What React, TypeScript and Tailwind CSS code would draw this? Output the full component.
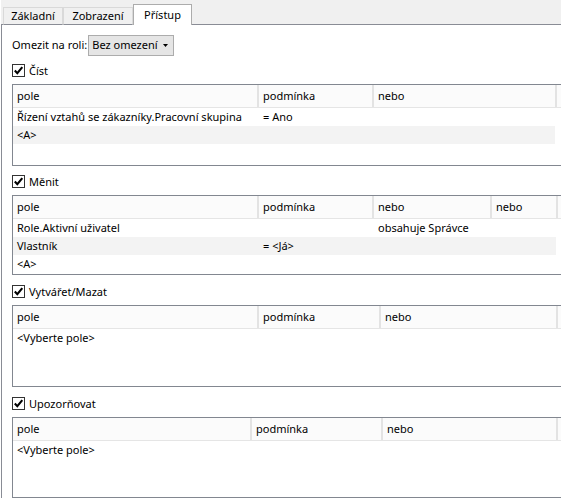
import React from 'react';

type Column = { label: string; width: number };
type Row = string[];

function CheckBox() {
  return (
    <span className="flex h-[13px] w-[13px] items-center justify-center border border-[#333333] bg-white">
      <svg width="11" height="11" viewBox="0 0 11 11">
        <path d="M1.8 5.6 L4.3 8.2 L9.3 2.2" fill="none" stroke="#000" strokeWidth="2.1" />
      </svg>
    </span>
  );
}

function Grid({ columns, rows, height }: { columns: Column[]; rows: Row[]; height: number }) {
  const total = columns.reduce((s, c) => s + c.width, 0);
  return (
    <div className="w-[580px] border border-[#828790] bg-white" style={{ height }}>
      <div className="flex h-[23px] border-b border-[#e5e5e5] bg-[#fbfbfb]">
        {columns.map((c, i) => (
          <div
            key={i}
            className="flex shrink-0 items-center border-r-2 border-[#e3e3e3] pl-[4px]"
            style={{ width: c.width }}
          >
            {c.label}
          </div>
        ))}
      </div>
      {rows.map((r, ri) => (
        <div
          key={ri}
          className={ri % 2 === 1 ? 'flex h-[18px] items-center bg-[#f3f3f3]' : 'flex h-[18px] items-center'}
          style={{ width: total - 2 }}
        >
          {columns.map((c, i) => (
            <div key={i} className="shrink-0 whitespace-nowrap pl-[4px]" style={{ width: c.width }}>
              {r[i] || ''}
            </div>
          ))}
        </div>
      ))}
    </div>
  );
}

function Section({ label, children, top }: { label: string; children: React.ReactNode; top: number }) {
  return (
    <div style={{ marginTop: top }}>
      <div className="flex h-[13px] items-center gap-[4px]">
        <CheckBox />
        <span className="leading-none">{label}</span>
      </div>
      <div className="mt-[7px]">{children}</div>
    </div>
  );
}

export default function App() {
  return (
    <div className="h-[501px] w-[561px] overflow-hidden bg-white font-['Noto_Sans',sans-serif] text-[11px] text-black">
      <div className="ml-[1px]">
        {/* tab strip */}
        <div className="relative flex h-[25px] items-end border-b border-[#898c95] bg-[#f0f0f0] pl-[2px]">
          <div className="relative -mb-px flex h-[18px] w-[60px] items-center justify-center border border-b-[#898c95] border-[#d9d9d9] bg-[#f0f0f0]">
            Základní
          </div>
          <div className="relative -mb-px flex h-[18px] w-[70px] items-center justify-center border border-b-[#898c95] border-[#d9d9d9] bg-[#f0f0f0]">
            Zobrazení
          </div>
          <div className="relative -mb-px flex h-[21px] w-[59px] items-start justify-center border border-b-0 border-[#acacac] bg-white pt-[2px]">
            Přístup
          </div>
        </div>

        {/* panel */}
        <div className="border-l border-[#898c95] pl-[10px] pt-[10px]">
          <div className="flex h-[21px] items-center">
            <span className="mr-[1px]">Omezit na roli:</span>
            <div className="flex h-[21px] w-[86px] items-center justify-between border border-[#acacac] bg-[#e5e5e5] pl-[3px] pr-[5px]">
              <span>Bez omezení</span>
              <svg width="5" height="3" viewBox="0 0 5 3">
                <path d="M0 0 H5 L2.5 3 Z" fill="#000" />
              </svg>
            </div>
          </div>

          <Section label="Číst" top={8}>
            <Grid
              height={82}
              columns={[
                { label: 'pole', width: 246 },
                { label: 'podmínka', width: 115 },
                { label: 'nebo', width: 183 },
              ]}
              rows={[['Řízení vztahů se zákazníky.Pracovní skupina', '= Ano'], ['<A>']]}
            />
          </Section>

          <Section label="Měnit" top={9}>
            <Grid
              height={80}
              columns={[
                { label: 'pole', width: 246 },
                { label: 'podmínka', width: 115 },
                { label: 'nebo', width: 118 },
                { label: 'nebo', width: 66 },
              ]}
              rows={[
                ['Role.Aktivní uživatel', '', 'obsahuje Správce'],
                ['Vlastník', '= <Já>'],
                ['<A>'],
              ]}
            />
          </Section>

          <Section label="Vytvářet/Mazat" top={10}>
            <Grid
              height={82}
              columns={[
                { label: 'pole', width: 246 },
                { label: 'podmínka', width: 122 },
                { label: 'nebo', width: 177 },
              ]}
              rows={[['<Vyberte pole>']]}
            />
          </Section>

          <Section label="Upozorňovat" top={10}>
            <Grid
              height={81}
              columns={[
                { label: 'pole', width: 239 },
                { label: 'podmínka', width: 131 },
                { label: 'nebo', width: 175 },
              ]}
              rows={[['<Vyberte pole>']]}
            />
          </Section>
        </div>
      </div>
    </div>
  );
}
